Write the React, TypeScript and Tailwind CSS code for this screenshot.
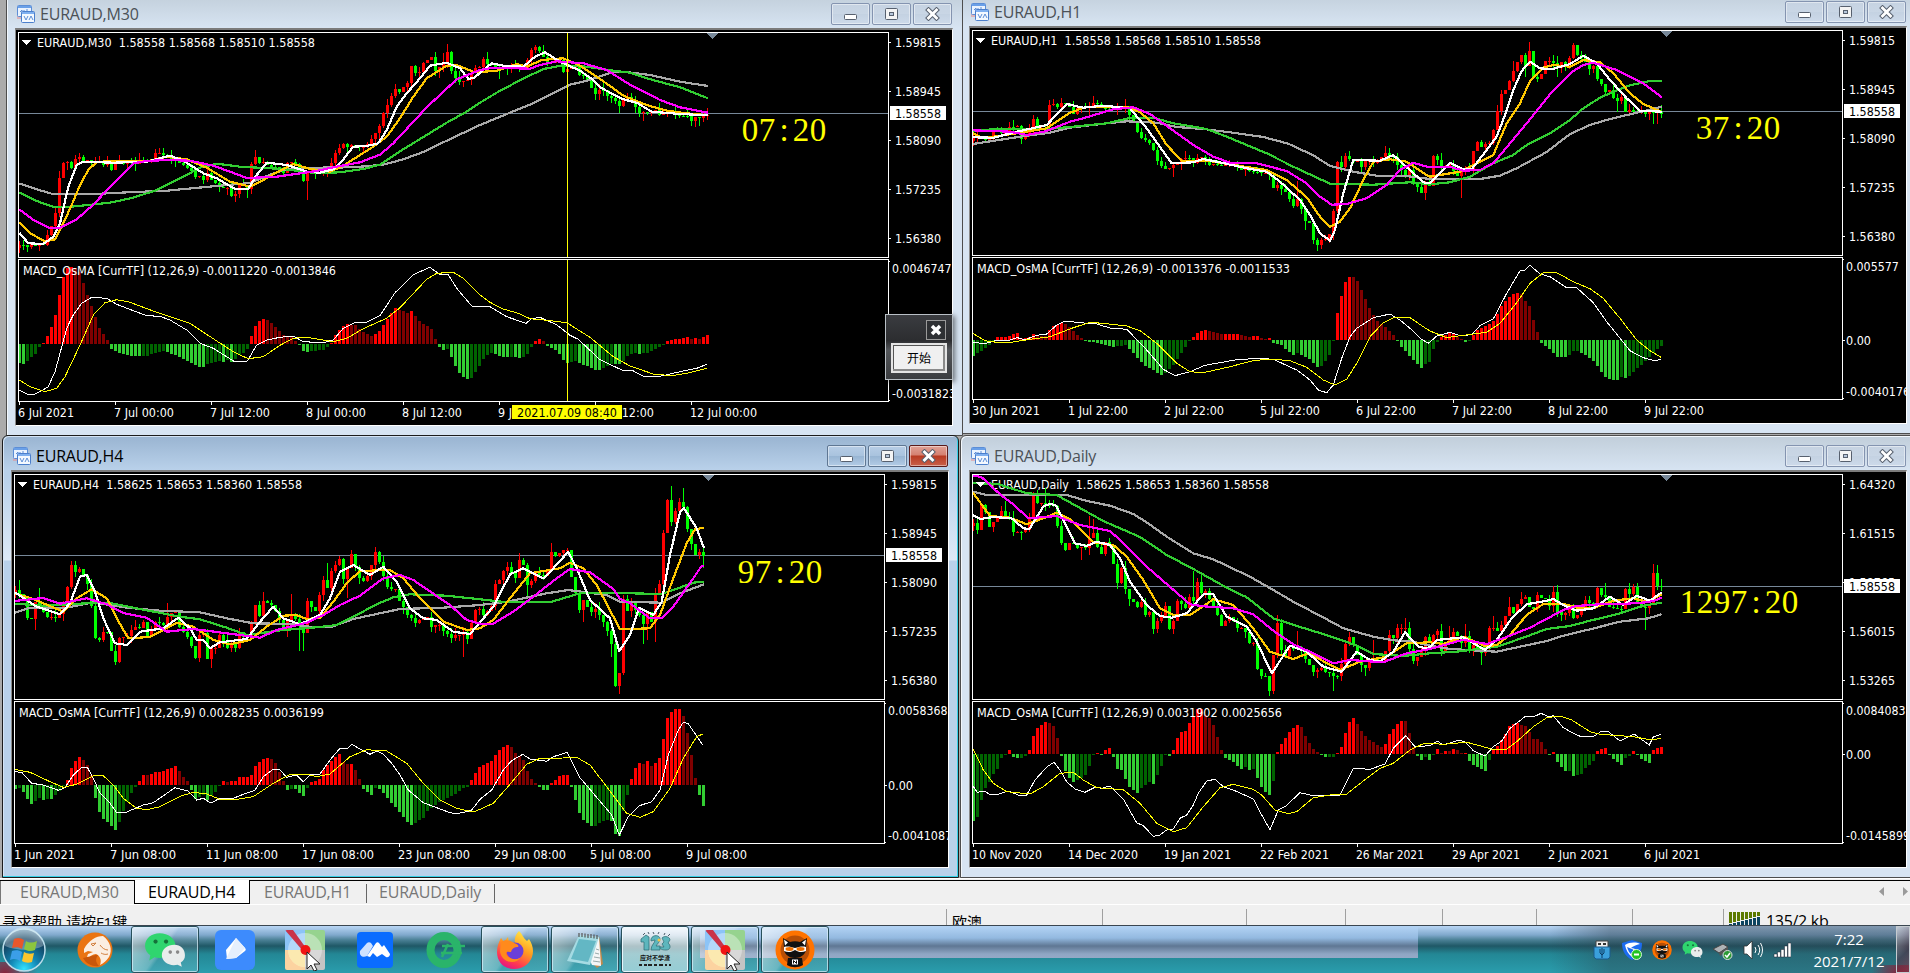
import type { ReactNode } from 'react';
import clsx from 'clsx';

type Point = [number, number];

type ChartData = {
  // sampling origin and the shift of the second half of every track (3 units per pixel)
  ox: number;
  oy: number;
  shift: number;
  close: string;
  wicks: string;
  white: string;
  gold: string;
  magenta: string;
  green: string;
  gray: string;
  zero: number;
  hist: string;
  macd: string;
  signal: string;
};

type ChartProps = {
  data: ChartData;
  title: string;
  titleWidth: number;
  macdTitle: string;
  macdWidth: number;
  prices: string[];
  priceY: number;
  scale: [string, string];
  timer: string;
  timerX: number;
  timerY: number;
  dates: [string, number][];
  crosshair?: boolean;
};

const BARS = 173;

const m30: ChartData = {
  ox: 54,
  oy: 96,
  shift: 1440,
  close:
    '58,735 70,735 82,740 94,730 106,737 118,728 130,735 142,706 154,680 166,643 178,535 190,488 202,484 214,505 226,478 238,470 250,482 290,486 310,495 322,482 334,510 346,490 400,485 440,485 455,480 466,460 478,458 490,465 510,475 540,490 560,502 586,530 610,540 622,518 646,550 670,565 682,562 694,588 706,582 718,550 742,570 754,492 766,470 778,488 802,495 850,520 862,490 880,484 898,512 910,545 922,518 960,520 990,500 1006,460 1030,430 1042,442 1054,435 1090,440 1110,425 1126,400 1138,380 1150,340 1162,315 1174,290 1186,268 1198,278 1210,262 1222,250 1234,198 1246,218 1258,218 1270,190 1282,180 1294,170 1306,215 1330,190 1342,155 1354,212 1366,235 1378,245 1402,240 1426,205 1434,185|0,205 10,178 35,195 60,205 80,210 95,195 130,205 142,180 154,150 166,140 178,152 200,185 240,180 250,215 275,205 290,200 300,230 322,240 346,282 370,270 394,292 420,320 430,300 450,290 465,320 478,340 500,340 520,330 540,345 560,338 590,345 620,345 634,365 646,350 658,355 672,345 684,345',
  wicks: '766,450 706,605 922,600 478,445 1342,132 1330,160 1318,235 742,593 82,755|58,236 418,338 490,362 634,378 658,378 346,300',
  white:
    '58,698 85,730 130,732 160,710 180,670 205,560 230,495 250,485 340,488 440,485 510,467 550,482 610,520 650,535 705,567 745,566 770,525 800,488 860,495 920,515 960,518 1000,508 1030,478 1060,440 1100,438 1135,430 1160,390 1190,320 1220,280 1260,235 1290,197 1340,188 1380,205 1405,237 1425,232|0,218 35,190 70,197 130,200 165,170 195,157 240,185 300,212 340,240 365,265 430,298 470,308 515,335 600,342 684,346',
  gold: '58,666 90,700 135,724 165,718 190,670 215,615 240,555 265,510 290,486 340,483 440,484 500,470 560,478 620,503 690,545 750,560 790,540 830,517 880,492 930,507 990,515 1030,497 1080,465 1120,440 1160,410 1200,355 1240,290 1280,235 1340,197 1370,195 1420,215|0,216 50,212 110,192 140,200 185,180 250,175 300,197 350,230 400,265 430,287 500,315 560,332 620,340 684,346',
  magenta:
    '58,628 100,660 150,684 180,684 230,658 280,614 340,550 400,490 440,483 500,480 570,482 640,497 690,515 740,534 830,530 950,513 1000,502 1080,487 1140,464 1180,430 1280,322 1370,238 1420,218|0,210 40,203 150,206 180,195 230,184 310,190 380,210 450,254 540,300 600,322 684,338',
  green:
    '58,577 110,603 158,620 215,620 330,608 400,593 470,570 550,530 600,503 650,491 720,500 850,507 950,520 1020,517 1090,507 1140,494 1210,448 1340,368 1400,335|0,308 60,272 130,236 190,207 250,196 310,199 400,212 450,218 500,235 600,262 684,295',
  gray: '58,550 110,568 158,582 300,581 385,577 500,572 640,559 750,549 800,528 850,510 940,503 1060,502 1150,494 1210,478 1270,456 1340,422|0,375 90,338 160,310 270,254 320,242 400,216 440,216 510,225 600,245 684,258',
  zero: 1032,
  hist: '58,1088 70,1092 82,1085 94,1070 106,1062 118,1043 130,1029 142,1008 154,981 166,948 178,888 190,832 202,805 214,800 226,803 238,815 250,847 262,882 274,918 286,951 298,983 310,1001 322,1020 334,1047 358,1060 394,1067 418,1068 442,1067 466,1058 490,1052 502,1056 526,1065 562,1083 598,1101 610,1102 622,1091 646,1085 658,1082 670,1086 682,1080 694,1086 718,1066 742,1050 754,1010 766,979 778,962 790,957 802,960 826,980 850,1005 874,1012 886,1022 898,1030 910,1053 922,1056 946,1052 970,1050 994,1030 1006,1005 1030,978 1042,972 1066,976 1090,996 1114,1008 1126,1003 1138,995 1162,957 1186,924 1222,938 1234,933 1258,963 1294,987 1306,1017 1318,1041 1330,1050 1342,1046 1354,1071 1366,1098 1378,1118 1390,1131 1402,1137 1414,1134 1426,1118|-2,1098 10,1076 22,1065 34,1058 46,1062 70,1071 82,1072 94,1070 106,1072 118,1073 130,1071 142,1062 154,1043 166,1023 178,1017 190,1023 202,1037 226,1050 238,1062 250,1080 262,1090 286,1083 298,1090 322,1099 346,1110 358,1111 370,1104 394,1092 418,1093 430,1083 442,1068 466,1058 478,1062 502,1058 526,1048 550,1036 562,1022 586,1018 622,1011 634,1018 646,1014 658,1017 670,1011 682,1005',
  macd: '58,1170 85,1184 105,1182 125,1172 145,1160 165,1115 180,1060 200,985 220,945 245,910 275,892 320,895 350,913 400,932 440,947 480,949 510,960 560,990 600,1030 640,1045 705,1086 742,1083 770,1035 800,1020 840,1012 880,1008 910,1025 970,1028 1000,1020 1030,985 1065,967 1100,967 1140,947 1185,878 1240,824 1290,802 1320,824 1345,824 1370,865 1415,918|0,919 30,920 80,950 138,970 155,956 180,952 230,974 270,1006 295,1018 360,1079 430,1112 455,1110 490,1129 535,1130 600,1115 650,1105 680,1093',
  signal:
    '58,1140 90,1160 135,1175 170,1165 195,1130 240,1035 280,945 315,908 350,899 385,905 470,937 570,970 650,1023 705,1058 745,1076 790,1070 840,1036 880,1015 920,1012 1000,1025 1040,1015 1090,986 1160,955 1200,923 1280,838 1310,820 1360,817 1390,835|0,885 30,907 70,927 115,940 150,956 200,961 260,968 330,1012 400,1070 450,1098 520,1122 575,1127 620,1120 680,1105',
};

const h1: ChartData = {
  ox: 36,
  oy: 90,
  shift: 1410,
  close:
    '40,415 52,412 76,422 100,385 112,395 124,400 170,370 184,418 208,385 220,355 232,380 256,378 268,316 292,320 304,308 328,320 340,342 352,325 400,310 424,322 460,328 484,325 500,315 510,350 522,370 534,398 546,415 558,420 570,430 582,452 594,488 606,500 630,505 640,495 660,480 680,472 700,490 724,470 750,495 770,495 800,495 830,498 850,515 880,515 910,520 930,525 940,565 955,552 975,575 990,598 1002,622 1014,595 1026,632 1038,668 1050,670 1062,728 1072,735 1084,720 1108,705 1120,638 1132,485 1144,502 1156,468 1168,478 1192,478 1204,502 1216,482 1240,490 1270,465 1280,455 1300,470 1312,495 1336,525 1348,510 1360,545 1372,560 1384,580 1396,545 1405,562|-2,562 10,468 22,480 35,500 60,490 82,530 94,512 118,508 130,455 142,425 154,440 178,430 190,393 202,335 214,283 226,272 238,243 250,215 262,187 274,165 286,200 298,150 310,230 322,237 334,225 346,183 358,182 382,205 394,185 410,200 418,175 430,135 442,165 460,180 480,208 490,195 502,238 514,250 526,275 538,268 550,295 562,303 574,290 586,335 600,330 630,335 650,342 670,340 682,335 694,342',
  wicks: '280,297 184,432 640,532 1084,748 1276,438 1396,600 1012,542 1036,690|94,593 298,126 286,230 382,230 562,335 670,372 682,372 250,183',
  white:
    '38,412 100,413 180,393 260,375 320,312 370,323 430,317 510,325 560,385 635,490 700,487 730,477 780,487 860,505 920,515 960,545 1020,600 1050,645 1080,700 1110,722 1125,690 1150,580 1180,480 1260,482 1300,465 1360,520 1395,550|0,550 60,488 100,508 125,508 170,450 200,410 225,345 250,270 275,213 300,185 330,205 365,208 420,192 460,167 500,190 540,240 590,295 630,332 695,335',
  gold: '38,400 70,415 150,403 260,385 330,338 380,320 500,320 540,337 580,370 620,435 665,482 750,483 840,498 920,510 980,540 1040,592 1080,650 1110,680 1140,665 1170,625 1210,540 1240,485 1290,478 1340,485 1400,525|0,530 90,515 190,465 230,370 270,310 300,243 340,203 370,195 420,200 460,180 510,187 550,220 600,280 640,312 695,336',
  magenta:
    '38,391 150,395 200,405 260,393 330,365 380,352 460,328 520,322 570,342 630,385 700,435 760,470 810,488 890,490 980,513 1040,550 1080,590 1115,614 1160,612 1220,595 1280,555 1320,510 1360,488 1400,500|0,500 60,500 100,512 150,510 190,490 240,430 300,358 360,283 430,213 460,195 490,188 560,210 640,250 695,292',
  green:
    '38,392 100,388 250,388 330,381 440,370 510,354 580,353 640,370 740,387 800,410 920,460 1000,500 1060,528 1110,551 1240,554 1350,547|0,553 60,547 120,530 190,490 250,465 290,435 360,400 420,360 460,325 510,293 550,275 600,256 660,243 695,243',
  gray: '38,432 130,418 200,407 270,398 330,383 440,370 500,364 590,368 650,381 730,387 810,397 910,411 985,431 1060,466 1110,498 1180,515 1250,527 1330,527|0,537 150,537 210,527 260,505 350,456 420,402 480,375 540,357 600,343 640,334 695,320',
  zero: 1020,
  hist: '40,1068 52,1059 64,1053 76,1044 88,1035 100,1022 112,1011 136,1011 172,999 184,1014 208,1012 220,1002 256,1010 268,990 280,978 304,970 316,973 328,981 352,1004 376,1022 400,1027 424,1033 460,1041 484,1038 496,1036 508,1047 520,1059 532,1074 556,1098 580,1111 604,1124 616,1118 640,1095 664,1059 688,1022 700,1011 712,999 736,990 784,1002 832,1002 868,1011 892,1008 916,1018 928,1014 940,1029 964,1036 1000,1064 1012,1059 1024,1066 1048,1077 1072,1101 1084,1097 1096,1085 1108,1068 1120,1025 1132,942 1144,890 1156,846 1168,830 1180,832 1192,843 1204,870 1216,897 1228,923 1240,945 1252,963 1276,981 1300,1003 1312,1023 1324,1041 1348,1066 1384,1104 1396,1092|-2,1089 10,1049 22,1027 34,1012 58,999 70,997 82,1012 94,1017 106,1026 118,1025 130,1006 142,990 178,972 190,963 202,942 214,918 226,903 250,882 262,879 274,880 286,903 298,915 310,957 322,996 334,1029 358,1047 382,1071 406,1072 418,1066 430,1053 442,1052 466,1066 490,1083 502,1098 526,1131 550,1140 562,1141 574,1131 586,1134 598,1127 634,1095 658,1070 682,1047 694,1037',
  macd: '38,1027 75,1031 105,1022 150,1020 172,1013 195,1019 230,1006 260,1002 290,975 315,963 360,968 410,972 450,984 500,988 520,1008 560,1050 610,1108 645,1127 690,1115 735,1096 830,1079 900,1075 940,1078 1010,1110 1050,1140 1075,1170 1100,1178 1120,1155 1145,1075 1170,1010 1190,985 1240,953 1290,942 1320,960 1350,985 1380,1015 1405,1030|0,1026 20,1008 60,997 90,1007 125,1004 150,977 190,957 230,880 270,812 285,810 300,796 330,822 360,830 410,863 440,863 490,908 530,965 600,1052 640,1073 675,1082 693,1078',
  signal:
    '38,1000 75,1022 110,1027 160,1026 210,1018 270,1010 340,983 390,967 440,971 500,978 540,992 590,1030 650,1090 690,1115 730,1118 810,1100 880,1082 930,1077 990,1082 1040,1102 1090,1140 1125,1155 1160,1138 1190,1090 1230,1010 1270,968 1300,953 1350,953 1390,980|0,993 50,1013 100,1006 170,997 210,970 260,908 300,850 340,818 380,818 430,845 480,866 520,895 570,955 620,1020 660,1052 693,1072',
};

const h4: ChartData = {
  ox: 42,
  oy: 117,
  shift: 1440,
  close:
    '46,465 70,485 82,548 94,555 106,500 130,530 154,545 178,540 202,460 214,388 226,410 238,402 262,445 274,510 286,608 298,615 310,590 322,590 334,645 346,683 358,610 382,605 394,585 418,580 430,560 442,605 466,560 490,572 502,545 526,530 538,575 550,590 574,632 586,672 598,600 610,590 622,672 634,640 646,640 658,600 682,640 694,625 706,640 718,590 742,605 754,570 766,510 778,545 790,498 814,510 838,555 850,590 874,535 898,570 910,598 922,498 946,530 970,435 982,460 994,410 1018,370 1030,435 1054,355 1078,430 1090,440 1102,425 1126,350 1138,380 1162,455 1186,460 1198,498 1210,515 1222,540 1246,565 1258,555 1280,540 1294,575 1310,570 1354,610 1378,600 1390,590 1402,615 1414,565 1426,525|-2,520 10,540 34,515 46,447 58,435 70,408 82,395 106,430 118,375 130,388 142,450 166,415 190,425 202,405 214,350 226,362 250,345 262,340 274,425 298,525 310,495 334,530 346,520 370,560 382,588 394,620 406,755 418,725 430,490 442,530 454,500 478,540 490,570 502,530 514,565 526,480 538,455 550,297 562,192 574,262 586,230 598,200 610,212 622,280 634,325 646,360 658,350 670,364',
  wicks:
    '106,586 118,458 58,435 346,690 634,700 898,647 910,647 874,477 1054,345 1126,336 1390,665 1042,490 790,470 502,505 982,385 1018,362|394,665 418,776 490,627 502,615 526,620 574,153 610,160 214,323 142,482 670,400 118,355 310,560 82,380',
  white:
    '44,472 110,515 180,538 210,505 240,425 260,420 285,470 310,550 345,625 380,630 420,590 490,580 535,548 570,580 590,615 610,615 630,640 660,622 740,612 780,560 820,515 850,550 900,568 960,540 990,490 1020,410 1060,390 1110,420 1150,395 1190,440 1230,520 1270,550 1310,555 1360,590 1410,597|0,562 40,515 90,418 130,400 190,430 220,400 265,350 290,400 330,495 390,550 418,648 450,600 478,518 520,540 545,500 570,360 600,232 612,220 650,280 672,340',
  gold: '44,475 100,492 190,530 230,490 275,463 320,490 350,550 385,610 450,606 530,563 580,575 640,615 690,628 750,615 800,575 850,542 890,540 920,552 960,548 1000,500 1040,445 1080,408 1170,405 1210,430 1260,490 1330,560 1400,585|0,580 40,555 90,490 150,415 240,400 270,383 310,400 350,450 420,583 510,580 540,540 580,430 620,325 645,283 672,278',
  magenta:
    '44,498 130,489 180,506 260,490 320,508 370,534 440,548 500,590 580,582 680,595 780,608 830,585 920,563 970,540 1020,510 1080,482 1150,430 1200,420 1240,435 1310,483 1350,510 1400,555|0,566 40,566 100,530 160,485 230,430 270,402 330,412 400,462 420,492 450,505 510,550 545,550 580,515 640,430 665,392 672,392',
  green:
    '44,506 130,512 260,505 330,504 420,522 540,545 600,553 680,578 740,600 850,585 960,576 1010,570 1060,545 1130,508 1180,487 1230,478 1340,482|0,493 80,502 210,502 300,475 450,475 545,477 580,465 640,443 672,440',
  gray: '44,533 90,518 200,518 280,502 380,518 480,527 600,532 680,550 760,565 870,567 930,575 995,575 1060,552 1200,522 1330,518|0,510 70,502 130,490 200,475 265,465 380,480 420,500 545,503 600,475 672,448',
  zero: 1050,
  hist: '46,1062 58,1058 70,1071 82,1092 94,1107 118,1088 130,1095 142,1091 154,1092 178,1070 190,1055 202,1038 214,999 226,978 238,966 250,975 262,990 274,1018 286,1088 298,1130 310,1152 334,1172 346,1185 358,1163 370,1130 382,1103 394,1076 406,1058 418,1038 430,1020 442,1021 466,1012 490,1008 526,993 538,1008 550,1025 562,1038 574,1065 586,1092 610,1080 622,1095 646,1073 658,1055 670,1038 682,1041 706,1037 718,1026 742,1026 754,1020 766,993 790,972 802,968 814,972 826,984 838,1010 850,1036 862,1065 874,1061 886,1062 898,1073 910,1085 922,1059 934,1041 958,1033 970,1005 994,978 1018,957 1030,980 1042,987 1054,986 1066,1005 1078,1032 1090,1061 1114,1080 1126,1060 1138,1062 1150,1072 1174,1103 1198,1130 1222,1160 1234,1170 1246,1163 1270,1149 1282,1128 1306,1110 1342,1088 1366,1078 1390,1060 1402,1058 1414,1035 1426,1014|-2,996 10,990 34,978 46,960 58,945 82,930 94,936 106,953 130,972 142,1008 154,1032 166,1042 178,1055 190,1064 202,1065 214,1044 226,1035 238,1023 262,1020 274,1053 286,1092 298,1133 310,1154 334,1173 346,1172 370,1158 382,1156 394,1157 406,1196 418,1206 430,1130 442,1083 454,1032 466,999 478,984 490,988 502,978 514,993 526,984 538,972 550,915 562,849 574,831 586,823 598,822 610,840 622,891 634,957 646,1026 658,1080 670,1113',
  macd: '44,1010 65,1012 95,1045 130,1050 175,1066 195,1058 220,1020 245,997 262,997 280,1030 300,1075 330,1105 350,1133 375,1133 430,1110 460,1103 525,1058 565,1068 590,1095 610,1090 632,1104 660,1090 700,1090 730,1078 765,1066 790,1025 820,1003 840,1005 860,1027 890,1020 910,1040 930,1020 960,1017 990,975 1020,940 1040,942 1055,928 1080,942 1110,958 1130,948 1150,958 1175,985 1200,1020 1225,1065 1270,1103 1350,1133 1370,1136 1400,1130 1415,1125|0,1093 35,1065 70,1005 95,977 128,958 150,972 200,979 220,965 262,952 300,1028 395,1140 418,1200 445,1145 478,1112 515,1100 540,1065 565,960 595,885 610,862 625,866 668,930',
  signal:
    '44,1003 90,1012 150,1040 190,1057 230,1048 280,1022 310,1022 340,1050 370,1090 410,1120 440,1124 480,1115 540,1084 580,1072 620,1077 660,1093 700,1095 760,1085 820,1045 870,1018 920,1018 950,1025 990,1017 1050,965 1100,944 1160,948 1220,985 1270,1045 1320,1095 1370,1120 1420,1131|0,1123 40,1105 90,1048 140,988 180,970 250,969 290,967 330,990 380,1055 440,1135 480,1147 520,1130 570,1060 610,970 650,905 668,897',
};

const daily: ChartData = {
  ox: 36,
  oy: 117,
  shift: 1410,
  close:
    '40,262 52,288 64,208 76,230 88,278 112,250 124,228 150,250 162,298 172,290 198,285 208,250 220,182 232,205 256,210 280,212 292,270 304,322 316,345 328,325 352,340 376,340 388,310 400,292 412,335 424,358 436,322 448,330 460,385 472,445 484,395 496,462 508,490 532,518 544,500 556,540 568,530 580,582 604,545 616,510 628,582 640,560 652,498 676,520 688,485 700,500 712,440 724,475 736,468 748,490 772,540 784,575 808,545 832,580 856,590 868,625 880,620 892,700 904,722 916,722 928,772 940,665 952,560 964,645 976,665 988,640 1024,645 1048,690 1060,710 1084,700 1108,715 1132,725 1144,690 1156,628 1168,605 1180,630 1204,690 1216,700 1230,670 1264,680 1276,650 1288,600 1300,610 1312,580 1336,575 1348,640 1360,680 1384,650 1396,605|-2,625 10,600 22,585 34,650 46,625 70,590 94,625 106,600 118,650 130,630 154,655 166,640 178,580 202,590 214,570 226,545 238,515 250,535 262,508 286,485 298,515 310,525 322,480 346,490 358,515 370,468 382,530 406,535 418,510 430,550 442,540 454,520 466,495 490,510 502,458 514,480 526,485 538,515 550,520 574,525 586,462 598,478 610,455 622,500 646,520 658,515 670,412 682,453 694,456',
  wicks:
    '388,243 400,252 256,160 232,165 364,375 700,408 724,412 1012,587 1120,768 952,540 1240,615 1336,549 940,776 580,597 136,198 1216,723|154,690 646,585 670,387 682,390 274,472 58,572 106,567 394,558 526,445 238,487 190,543',
  white:
    '38,240 60,252 100,246 155,250 190,280 208,282 250,215 270,206 288,212 310,255 345,325 380,333 410,320 450,330 480,370 510,440 560,510 600,543 635,548 680,535 730,478 760,478 800,545 860,575 890,620 935,715 990,632 1040,650 1090,695 1145,710 1190,650 1230,675 1260,680 1300,650 1335,592 1375,635 1400,640|0,635 20,615 100,607 165,645 200,615 245,550 290,508 350,497 370,492 400,510 440,527 490,520 540,485 580,510 620,482 660,497 695,472',
  gold: '38,172 90,243 150,248 200,268 250,250 290,233 330,253 400,322 460,330 500,365 550,435 600,520 640,540 690,540 760,493 820,510 880,580 930,650 1000,672 1045,655 1140,705 1200,680 1280,665 1340,625|0,622 40,627 100,605 170,635 200,630 240,600 290,540 340,507 400,507 450,520 490,520 550,497 610,490 650,500 695,478',
  magenta:
    '38,121 65,127 120,178 160,208 205,250 290,243 360,270 450,288 480,315 560,395 620,447 690,508 730,514 820,520 880,538 940,587 1000,628 1060,655 1120,685 1170,675 1270,682 1340,655|0,642 100,614 170,627 220,610 300,578 400,525 440,513 520,507 590,506 650,502 680,495 695,488',
  green:
    '38,145 110,146 200,175 290,180 340,208 430,258 540,306 620,360 700,402 800,458 860,487 940,550 1010,573 1090,597 1150,617 1190,632 1240,657 1330,663|0,655 80,650 200,635 280,608 350,582 420,573 480,557 560,538 640,512 695,503',
  gray: '38,170 80,180 320,180 380,198 450,212 520,237 560,262 620,305 700,355 760,373 870,425 940,465 1000,500 1100,553 1150,580 1240,605 1300,616 1360,620|0,632 60,642 200,650 280,633 350,618 400,602 480,583 570,560 655,550 695,538',
  zero: 958,
  hist: '40,1158 52,1149 64,1095 76,1060 88,1041 100,1017 112,1002 124,968 136,961 148,945 160,966 172,970 184,968 196,965 208,948 220,903 232,879 256,861 268,864 280,870 292,906 304,960 316,1006 328,1028 340,1041 352,1036 376,1022 388,993 400,960 412,954 424,962 436,945 448,939 460,963 472,1002 484,1005 496,1031 508,1056 532,1074 544,1058 568,1042 580,1047 604,995 616,960 628,963 640,948 652,909 664,891 676,888 688,864 712,822 724,820 736,840 748,849 760,870 772,903 784,945 796,969 820,982 844,1002 856,995 868,1005 880,1000 892,1029 904,1055 928,1083 940,1041 952,951 964,927 988,891 1012,870 1024,876 1036,903 1048,924 1060,942 1072,950 1084,961 1096,966 1120,965 1132,954 1144,939 1156,897 1168,861 1180,849 1192,867 1204,888 1228,915 1264,936 1276,927 1288,897 1312,867 1324,858 1336,857 1348,891 1360,935 1372,961 1384,975 1396,965|-2,975 10,962 22,942 34,954 46,948 58,949 70,942 82,943 94,955 106,954 118,978 130,990 166,1008 178,975 190,945 202,933 214,915 226,897 238,873 262,864 274,870 286,871 298,891 310,911 322,912 334,921 346,942 358,961 370,950 382,981 406,1008 418,1007 430,1023 442,1020 454,1019 466,1000 490,980 502,948 526,939 538,955 550,972 574,990 586,970 598,965 610,948 622,961 634,971 658,987 670,945 682,938 694,936',
  macd: '38,1052 52,1072 75,1068 90,1080 115,1078 145,1068 175,1080 200,1080 225,1035 260,996 282,982 300,1005 320,1040 345,1062 375,1072 405,1057 425,1060 450,1053 490,1092 530,1163 550,1172 580,1204 600,1200 620,1185 640,1182 660,1150 680,1140 700,1110 715,1075 740,1038 765,1033 790,1055 820,1065 880,1092 905,1140 930,1184 955,1125 975,1115 1020,1073 1050,1080 1140,1080 1180,1000 1230,1003 1275,987 1300,940 1337,902 1365,935|0,932 22,918 40,930 85,916 105,920 130,947 165,963 190,935 215,918 240,880 285,845 310,846 333,835 355,845 370,842 400,878 430,895 455,906 490,905 515,888 535,890 570,918 612,897 658,930 670,906 692,898',
  signal:
    '38,940 70,1005 100,1045 140,1070 210,1077 250,1055 300,1015 340,1012 370,1035 410,1058 490,1064 540,1105 590,1165 640,1190 680,1178 730,1115 780,1058 820,1048 880,1063 905,1080 945,1125 985,1136 1010,1130 1060,1088 1110,1080 1160,1077 1220,1030 1260,1000 1300,985 1350,945 1390,926|0,925 40,928 110,922 150,932 190,944 230,942 260,920 310,875 350,848 390,843 425,855 480,890 510,898 610,905 660,914 692,911',
};

// "x,y x,y|x,y" -> points in chart pixels
function parse(track: string, d: ChartData): Point[] {
  return track.split('|').flatMap((half, n) =>
    half.split(' ').map((pair): Point => {
      const [x, y] = pair.split(',').map(Number);
      return [(x + n * d.shift - d.ox) / 3, (y - d.oy) / 3];
    }),
  );
}

function valueAt(points: Point[], x: number) {
  let k = 1;
  while (k < points.length - 1 && points[k][0] < x) k++;
  const [x0, y0] = points[k - 1];
  const [x1, y1] = points[k];
  const t = Math.min(1, Math.max(0, (x - x0) / (x1 - x0)));
  return y0 + (y1 - y0) * t;
}

const noise = (n: number) => {
  const s = Math.sin(n * 127.1 + 11.7) * 43758.5453;
  return s - Math.floor(s);
};

function buildCandles(d: ChartData) {
  const close = parse(d.close, d);
  const wicks = parse(d.wicks, d);
  let up = '';
  let down = '';
  let prev = valueAt(close, 1.5) + 3;
  for (let i = 0; i < BARS; i++) {
    const x = 4 * i + 1.5;
    let c = valueAt(close, x);
    if (!close.some(([px]) => Math.abs(px - x) < 2)) c += (noise(i) - 0.5) * 5;
    const top = Math.round(Math.min(prev, c));
    const bottom = Math.max(top + 1, Math.round(Math.max(prev, c)));
    let hi = top - Math.round(noise(i + 200) ** 2 * 7);
    let lo = bottom + Math.round(noise(i + 400) ** 2 * 7);
    wicks.forEach(([wx, wy]) => {
      if (Math.abs(wx - x) > 1.9) return;
      if (wy < top) hi = Math.round(wy);
      else lo = Math.round(wy);
    });
    const shape = `M${4 * i} ${top}h3v${bottom - top}h-3zM${4 * i + 1} ${hi}h1v${lo - hi}h-1z`;
    if (c <= prev) up += shape;
    else down += shape;
    prev = c;
  }
  return { up, down };
}

function buildHistogram(d: ChartData) {
  const points = parse(d.hist, d);
  const zero = Math.round((d.zero - d.oy) / 3);
  const paths = { rise: '', riseFade: '', fall: '', fallFade: '' };
  let prev = valueAt(points, 1.5) - 1;
  for (let i = 0; i < BARS; i++) {
    const v = valueAt(points, 4 * i + 1.5);
    const y = Math.round(v);
    const shape = `M${4 * i} ${zero}h3V${y === zero ? zero + 1 : y}h-3z`;
    if (y < zero) paths[v <= prev + 0.05 ? 'rise' : 'riseFade'] += shape;
    else paths[v >= prev - 0.05 ? 'fall' : 'fallFade'] += shape;
    prev = v;
  }
  return paths;
}

const toPoints = (track: string, d: ChartData) =>
  parse(track, d)
    .map(([x, y]) => `${x.toFixed(1)},${y.toFixed(1)}`)
    .join(' ');

function Label({ x, y, width, fill = '#fff', children }: { x: number; y: number; width: number; fill?: string; children: ReactNode }) {
  return (
    <text x={x} y={y} fill={fill} textLength={width} lengthAdjust="spacingAndGlyphs">
      {children}
    </text>
  );
}

function Chart(p: ChartProps) {
  const d = p.data;
  const candles = buildCandles(d);
  const hist = buildHistogram(d);
  const zeroY = Math.round((d.zero - d.oy) / 3);
  const averages: [string, string][] = [
    [d.gray, '#a9a9a9'],
    [d.green, '#32cd32'],
    [d.gold, '#ffc800'],
    [d.white, '#ffffff'],
    [d.magenta, '#ff00ff'],
  ];

  return (
    <svg
      width="936"
      height="395"
      className="block bg-black font-['DejaVu_Sans_Condensed','DejaVu_Sans',sans-serif] text-[12px]"
      shapeRendering="crispEdges"
    >
      <defs>
        <clipPath id={`pane-${p.timer}`}>
          <rect x="1" y="1" width="869" height="224" />
        </clipPath>
      </defs>
      <g transform="translate(2 2)">
        <rect x="1" y={p.priceY} width="869" height="1" fill="#778899" />
        <Label x={19} y={15} width={p.titleWidth}>
          {p.title}
        </Label>
        <g clipPath={`url(#pane-${p.timer})`}>
          <path d={candles.up} fill="#ff0000" />
          <path d={candles.down} fill="#00ff00" />
          {averages.map(([track, color]) => (
            <polyline key={color} points={toPoints(track, d)} fill="none" stroke={color} strokeWidth="2.2" strokeLinejoin="round" />
          ))}
        </g>
        <path d="M4 8h9l-4.5 5z" fill="#fff" />
        <path d="M689 1h11l-5.5 6z" fill="#778899" />

        <path d={hist.rise} fill="#ff0000" />
        <path d={hist.riseFade} fill="#800000" />
        <path d={hist.fall} fill="#32cd32" />
        <path d={hist.fallFade} fill="#006400" />
        <polyline points={toPoints(d.macd, d)} fill="none" stroke="#fff" />
        <polyline points={toPoints(d.signal, d)} fill="none" stroke="#ff0" />
        <Label x={5} y={243} width={p.macdWidth}>
          {p.macdTitle}
        </Label>

        <rect x="0.5" y="0.5" width="870" height="225" fill="none" stroke="#fff" />
        <rect x="0.5" y="227.5" width="870" height="142" fill="none" stroke="#fff" />
        <text
          x={p.timer
            .split('')
            .map((_, i) => p.timerX + i * 17)
            .join(' ')}
          y={p.timerY}
          textAnchor="middle"
          fill="#ff0"
          className="font-['Liberation_Serif',serif] text-[33px]"
        >
          {p.timer}
        </text>

        {p.prices.map((price, i) => (
          <g key={price}>
            <rect x="871" y={10 + i * 49} width="2" height="1" fill="#fff" />
            <Label x={877} y={15 + i * 49} width={46}>
              {price}
            </Label>
          </g>
        ))}
        <rect x="872" y={p.priceY - 7} width="56" height="14" fill="#fff" />
        <Label x={877} y={p.priceY + 5} width={46} fill="#000">
          1.58558
        </Label>

        <Label x={874} y={241} width={p.scale[0].length * 6.6}>
          {p.scale[0]}
        </Label>
        <rect x="871" y={zeroY} width="2" height="1" fill="#fff" />
        <Label x={874} y={zeroY + 5} width={25}>
          0.00
        </Label>
        <Label x={874} y={366} width={p.scale[1].length * 6.4}>
          {p.scale[1]}
        </Label>
        <path d="M871 229h1v1h-1zM871 368h1v1h-1z" fill="#fff" />

        {p.dates.map(([date, width], i) => (
          <g key={date}>
            <rect x={1 + i * 96} y="370" width="1" height="3" fill="#fff" />
            <Label x={i * 96} y={385} width={width}>
              {date}
            </Label>
          </g>
        ))}

        {p.crosshair && (
          <>
            <rect x="549" y="1" width="1" height="224" fill="#ff0" />
            <rect x="549" y="228" width="1" height="141" fill="#ff0" />
            <rect x="494" y="373" width="110" height="14" fill="#ff0" />
            <Label x={499} y={385} width={100} fill="#000">
              2021.07.09 08:40
            </Label>
          </>
        )}
      </g>
    </svg>
  );
}

function ChartIcon() {
  return (
    <svg width="18" height="18" viewBox="0 0 18 18" className="shrink-0">
      <path d="M0 11h5M0 13h4" stroke="#e88a8a" />
      <rect x="0.5" y="0.5" width="14" height="11" rx="1" fill="#eaf3ff" stroke="#5c8ed6" />
      <path d="M1 1h13v2H1z" fill="#6aa0e8" />
      <path d="M3 7l2-2v4m2-4v3m3-4v5" stroke="#5c8ed6" fill="none" />
      <rect x="4.5" y="6.5" width="13" height="11" rx="1" fill="#f4f9ff" stroke="#4b7fcc" />
      <path d="M5 7h12v2H5z" fill="#7fb0f0" />
      <path d="M7 11l2 4 2-4m1 4l2-4 2 4" stroke="#5c8ed6" fill="none" />
    </svg>
  );
}

function WindowButton({ kind, active }: { kind: 'min' | 'max' | 'close'; active?: boolean }) {
  const red = active && kind === 'close';
  return (
    <div
      className={clsx(
        'flex h-[22px] w-[39px] items-center justify-center rounded-[2px] border shadow-[inset_0_0_0_1px_rgba(255,255,255,0.45)]',
        red
          ? 'border-[#5a1a1a] bg-[linear-gradient(#e0a196,#d58171_45%,#b83a22_50%,#c8604a)]'
          : active
            ? 'border-[#5f7793] bg-[linear-gradient(#b7cde6,#a9c3de_48%,#98b5d3_52%,#b3cce6)]'
            : 'border-[#8494b0] bg-[linear-gradient(#c6d3e2,#c9d6e5_50%,#c4d2e2_52%,#cddaea)]',
      )}
    >
      <svg width="15" height="14" viewBox="0 0 15 14">
        {kind === 'min' && <rect x="1.5" y="7.5" width="12" height="5" rx="1" fill="#fff" stroke="#57606e" />}
        {kind === 'max' && (
          <>
            <rect x="1.5" y="1.5" width="12" height="11" rx="1" fill="#f4f4f4" stroke="#57606e" />
            <rect x="5.5" y="5.5" width="4" height="3" fill="#b8c8dc" stroke="#57606e" />
          </>
        )}
        {kind === 'close' && (
          <>
            <path d="M3.5 3l8 8M11.500 3l-8 8" stroke="#57606e" strokeWidth="4.800" strokeLinecap="square" />
            <path d="M3.5 3l8 8M11.500 3l-8 8" stroke="#fff" strokeWidth="2.800" strokeLinecap="square" />
          </>
        )}
      </svg>
    </div>
  );
}

function ChartWindow({ title, active, className, children }: { title: string; active?: boolean; className: string; children: ReactNode }) {
  return (
    <section
      className={clsx(
        'absolute h-[443px] w-[957px] rounded-t-[6px] border',
        active
          ? 'border-[#1c1c1c] bg-[linear-gradient(#99b4d1,#b9d1ea_34px,#b9d1ea_40px,#dde9f6_124px,#b9d1ea_125px)] shadow-[inset_-1px_-1px_0_#35cfe6,inset_1px_1px_0_#d5e4f4]'
          : 'border-[#4d4d4d] bg-[linear-gradient(#c1ceda,#d7e4f2_34px)] shadow-[inset_1px_1px_0_#f2f7fc]',
        className,
      )}
    >
      <header className="flex h-[34px] items-start pt-[9px] pr-[10px] pl-[10px]">
        <div className="flex grow items-center gap-[5px] pt-[2px]">
          <ChartIcon />
          <span className={clsx('text-base leading-[18px] tracking-[-0.2px]', active ? 'text-black' : 'text-[#4b5157]')}>{title}</span>
        </div>
        <div className="flex gap-[2px]">
          <WindowButton kind="min" active={active} />
          <WindowButton kind="max" active={active} />
          <WindowButton kind="close" active={active} />
        </div>
      </header>
      <div className="ml-2 w-[938px] border-t-2 border-r border-b border-l border-t-[#7b7b7b] border-r-white border-b-white border-l-[#8a8a8a]">
        {children}
      </div>
    </section>
  );
}

function TargetIcon() {
  return (
    <svg width="42" height="42" viewBox="0 0 42 42">
      <g clipPath="inset(0 round 2px)">
        <path d="M1 1h20v20H1z" fill="#8cc4f7" />
        <path d="M21 1h20v20H21z" fill="#96d38f" />
        <path d="M1 21h20v20H1z" fill="#fcd3a0" />
        <path d="M21 21h20v20H21z" fill="#c4c4c4" />
        <circle cx="21" cy="21" r="17" fill="#fff" opacity=".35" />
        <path d="M21 21L4 21a17 17 0 0 0 17 17z" fill="#fbe9b0" />
        <path d="M1 1h8l13 18-3 3z" fill="#c9344b" />
      </g>
      <circle cx="21.500" cy="21" r="5" fill="#f01414" />
      <path d="M23 23v17l4-4 3 6 3-1-3-6h6z" fill="#fff" stroke="#222" />
    </svg>
  );
}

function WeChatIcon({ size }: { size: number }) {
  return (
    <svg width={size} height={size} viewBox="0 0 40 40">
      <path d="M15 4C7 4 1 9 1 16c0 4 2 7 5 9l-1 5 5-3c9 2 20-2 20-11C30 9 23 4 15 4z" fill="#2fd56f" />
      <circle cx="11" cy="12" r="2" fill="#15713a" />
      <circle cx="21" cy="12" r="2" fill="#15713a" />
      <path d="M29 15c-7 0-12 4-12 10s7 11 15 9l4 2-1-4c3-2 4-4 4-7 0-6-4-10-10-10z" fill="#e9ecec" />
      <circle cx="25" cy="22" r="1.700" fill="#888" />
      <circle cx="32" cy="22" r="1.700" fill="#888" />
    </svg>
  );
}

function NinjaIcon({ size }: { size: number }) {
  return (
    <svg width={size} height={size} viewBox="0 0 40 40">
      <circle cx="20" cy="20" r="19.500" fill="#ff7300" />
      <circle cx="20" cy="20" r="14.500" fill="#b84f06" />
      <path d="M8 8l7 4c3-1 7-1 10 0l7-4-1 9c1 6-4 11-11 11S8 23 9 17z" fill="#111" />
      <path d="M9 9.500l4 3-3 3zM31 9.500l-4 3 3 3z" fill="#fff" />
      <path d="M9 17c4-1 7 0 11 1 4-1 7-2 11-1v4c-4 2-8 1-11-1-3 2-7 3-11 1z" fill="#fff" />
      <ellipse cx="14.500" cy="19" rx="4" ry="1.900" fill="#f07000" />
      <ellipse cx="25.500" cy="19" rx="4" ry="1.900" fill="#f07000" />
      <path d="M13 28h14l1 7c-5 3-11 3-16 0z" fill="#111" />
      <rect x="17" y="29.500" width="6" height="5" fill="#fff" />
      <path d="M18.500 33.500v-3l3 3v-3" stroke="#111" fill="none" />
    </svg>
  );
}

function StartOrb() {
  return (
    <svg width="46" height="46" viewBox="0 0 46 46">
      <defs>
        <radialGradient id="orb" cx=".5" cy=".95" r=".95">
          <stop offset="0" stopColor="#33e3ff" />
          <stop offset=".35" stopColor="#1287b5" />
          <stop offset=".75" stopColor="#12425f" />
          <stop offset="1" stopColor="#7fa6bf" />
        </radialGradient>
      </defs>
      <circle cx="23" cy="23" r="21" fill="url(#orb)" stroke="#b8dcea" strokeWidth="1.500" />
      <path d="M4 19a19 19 0 0 1 38 0c-10 5-26 5-38 0z" fill="#fff" opacity=".3" />
      <path d="M13 12c4-2 7-1 10 1l-2 9c-3-2-6-2-10-1z" fill="#e8572b" />
      <path d="M25 14c3 2 7 2 11 0l-2 9c-4 2-8 1-11-1z" fill="#8cc63e" />
      <path d="M11 24c3-1 7-1 10 1l-2 9c-3-2-6-3-10-1z" fill="#3b9ee8" />
      <path d="M23 25c3 2 7 2 10 1l-2 9c-3 1-7 1-10-1z" fill="#fbc52d" />
    </svg>
  );
}

function CheetahIcon() {
  return (
    <svg width="38" height="38" viewBox="0 0 38 38">
      <circle cx="19" cy="19" r="17.500" fill="#ea7412" />
      <path d="M7 27c3 6 10 9 16 8-4-4-4-9 1-12z" fill="#c9570a" />
      <path d="M8 18C13 9 20 5 27 5c7 5 10 14 6 21-3 4-5 6-9 8 2-5 0-9-4-11-4 0-5 3-9 3l1-3 5-2-5-1-4 2z" fill="#fbeee2" />
      <path d="M15 13l5-1-3 3zM24 14c2 3 5 5 8 5M25 22c2 1 4 2 7 1" stroke="#d2803f" fill="none" />
    </svg>
  );
}

function FirefoxIcon() {
  return (
    <svg width="40" height="40" viewBox="0 0 40 40">
      <defs>
        <linearGradient id="fox" x1=".8" y1="0" x2=".3" y2="1">
          <stop offset="0" stopColor="#fff04a" />
          <stop offset=".45" stopColor="#ff9a1f" />
          <stop offset=".8" stopColor="#ff3654" />
          <stop offset="1" stopColor="#e01585" />
        </linearGradient>
      </defs>
      <path d="M24 1c4 4 4 7 8 10l2-2c4 6 5 12 3 18-3 8-10 12-18 12C9 39 2 32 2 22c0-6 2-10 4-14l3 4 4-5 1 6c2-1 4-1 6 0-1-5 1-9 4-12z" fill="url(#fox)" />
      <circle cx="20" cy="21" r="8.500" fill="#6a3fd8" />
      <path d="M6 12c4-3 9-2 13 1 4 1 5 3 4 4-3 0-6 1-7 5-2 0-4-1-5 1 1 5 8 8 14 5-4 7-19 5-20-7z" fill="#ff8a1c" />
    </svg>
  );
}

function NotepadIcon() {
  return (
    <svg width="38" height="38" viewBox="0 0 38 38">
      <path d="M33 5l4 28-6 4-4-4z" fill="#c08a4d" />
      <path d="M13 4l20 2 2 29-9-1z" fill="#f4f6f7" />
      <path d="M13 4l20 2-9 28L1 30z" fill="#a5dbe3" />
      <path d="M13 8l17 2-8 21-17-3z" fill="#63b7c4" />
      <path d="M13 2v4M16 2v4M19 2.500v4M22 3v4M25 3v4M28 3.500v4M31 4v4" stroke="#555" strokeWidth="1.200" />
      <path d="M30 18l3 1M29 22l4 1M28 26l6 1M27 30l7 1" stroke="#9aa" />
    </svg>
  );
}

function MonstersIcon() {
  return (
    <svg width="36" height="38" viewBox="0 0 36 38">
      <g fill="#5db6bd" stroke="#2c6b72" strokeWidth=".7">
        <path d="M4 8l5-4 3 2v13H7v-8H4z" />
        <path d="M14 8c2-5 9-4 9 0 0 3-3 5-4 7h4v4h-9c0-5 4-7 4-10l-4 1z" />
        <path d="M25 7c3-3 8-1 8 2l-2 3c3 2 3 7-2 7-4 0-6-1-6-3h4l-2-3 2-2z" />
      </g>
      <path d="M6 4l2-2M12 3l-1-2M17 3l-1-2M21 3l1-2M27 4l1-2M31 5l2-2" stroke="#234" strokeWidth=".8" />
      <circle cx="22" cy="9" r="1.500" fill="#f4c542" />
      <text x="18" y="29" textAnchor="middle" fill="#111" className="font-['Noto_Sans_CJK_SC',sans-serif] text-[6px] font-bold">
        应对不学渣
      </text>
      <path d="M2 34h3M7 34h3M11 34h4M17 34h3M22 34h4M28 34h2M32 34h2" stroke="#222" strokeWidth="2" />
    </svg>
  );
}

const taskItems: { icon: ReactNode; look?: 'framed' | 'bright' }[] = [
  { icon: <CheetahIcon /> },
  { icon: <WeChatIcon size={42} />, look: 'framed' },
  {
    icon: (
      <svg width="40" height="40" viewBox="0 0 40 40">
        <rect width="40" height="40" rx="6" fill="#3d8bfd" />
        <path d="M12 29l-1-9L21 8l9 10c1 1 1 2 0 3l-9 7z" fill="#fff" />
        <path d="M21 8l9 10-9 10-10 1z" fill="#e5effd" />
      </svg>
    ),
  },
  { icon: <TargetIcon /> },
  {
    icon: (
      <svg width="36" height="36" viewBox="0 0 36 36">
        <rect width="36" height="36" rx="4" fill="#0a6cff" />
        <path d="M3 19l7-8c1-1 3-1 4 0l2 3-6 10c-4 2-8 0-7-5z" fill="#cfe2ff" />
        <path d="M10 24l9-13c1-1 2-1 3 0l3 4 2-2 6 9c0 2-2 4-4 3l-4-3-5 3-4-4-3 4z" fill="#fff" />
      </svg>
    ),
  },
  {
    icon: (
      <svg width="40" height="40" viewBox="0 0 40 40">
        <ellipse cx="19" cy="20" rx="13.500" ry="14" fill="none" stroke="#2ab46a" strokeWidth="8" />
        <path d="M17 16h23M16 23h21M23 14l-6 13M34 11l-3 17" stroke="#2ab46a" strokeWidth="2.500" />
      </svg>
    ),
  },
  { icon: <FirefoxIcon />, look: 'framed' },
  { icon: <NotepadIcon />, look: 'framed' },
  { icon: <MonstersIcon />, look: 'bright' },
  { icon: <TargetIcon />, look: 'framed' },
  { icon: <NinjaIcon size={40} />, look: 'framed' },
];

function Taskbar() {
  return (
    <footer className="flex h-12 items-stretch border-t border-[#3a4650] bg-no-repeat [background-image:radial-gradient(circle,#8a2038,transparent_70%),radial-gradient(circle,#8a2038,transparent_70%),linear-gradient(90deg,transparent,rgba(45,60,72,0.4)_60px),linear-gradient(#b4d4f5,#93b9e0_12px,#5f7793_20px,#8fa6c4_28px,#94a9c6),linear-gradient(#b9d6f5,#7fa8cc_9px,#4a8095_14px,#1f5866_20px,#238795_28px,#2a9cac_46px)] [background-position:-40px_36px,1860px_39px,1550px_0px,700px_0px,0px_0px] [background-size:90px_24px,80px_20px,360px_48px,718px_32px,1910px_48px]">
      <div className="flex w-[61px] items-center pl-[1px]">
        <StartOrb />
      </div>
      <div className="flex gap-[2px]">
        {taskItems.map((item, i) => (
          <div
            key={i}
            className={clsx(
              'flex h-[47px] w-[68px] items-center justify-center rounded-[3px]',
              item.look && 'border border-[#28505c]',
              item.look === 'framed' &&
                'bg-[linear-gradient(125deg,rgba(255,255,255,0.65),rgba(255,255,255,0.3)_45%,rgba(255,255,255,0.1)_50%,rgba(255,255,255,0.12))] shadow-[inset_0_0_0_1px_rgba(220,240,250,0.7)]',
              item.look === 'bright' &&
                'bg-[linear-gradient(rgba(255,255,255,0.85),rgba(255,255,255,0.6)_50%,rgba(255,255,255,0.5))] shadow-[inset_0_0_0_1px_rgba(240,250,255,0.9)]',
            )}
          >
            {item.icon}
          </div>
        ))}
      </div>

      <div className="ml-auto flex items-center gap-[10px] pr-[8px]">
        <svg width="20" height="20" viewBox="0 0 20 20">
          <path d="M4 1h12v7H4z" fill="#eee" stroke="#444" />
          <path d="M6 3h3v2H6zM11 3h3v2h-3z" fill="#333" />
          <path d="M2 7h16v10l-2 2H4l-2-2z" fill="#3aa0dc" stroke="#1a5b8c" />
          <path d="M8 9v4l2 2 2-2V9M10 8v10" stroke="#0d3f66" fill="none" />
        </svg>
        <svg width="20" height="20" viewBox="0 0 20 20">
          <path d="M0 3l10-3 10 3c0 8-3 13-10 17C3 16 0 11 0 3z" fill="#1c6cf0" />
          <path d="M3 5c5-3 11-3 15-1-4 1-7 2-9 4 4 1 6 1 7 3-2 4-4 5-6 6-4-3-6-7-7-12z" fill="#fff" />
          <path d="M5 7l5 2 5 3-5 3c-3-2-4-5-5-8z" fill="#1c6cf0" />
          <circle cx="14.500" cy="14.500" r="5" fill="#22c322" stroke="#d9f5d9" />
          <path d="M12 14.500h5" stroke="#fff" strokeWidth="2" />
        </svg>
        <NinjaIcon size={20} />
        <WeChatIcon size={21} />
        <svg width="20" height="20" viewBox="0 0 20 20">
          <path d="M0 9l10-5 5 3-9 6z" fill="#aeb2b6" stroke="#444" />
          <path d="M6 13l9-6v3l-8 6z" fill="#555" />
          <circle cx="14.500" cy="15" r="4.500" fill="#2a9a34" stroke="#ddd" />
          <path d="M12 15l2 2 3-4" stroke="#fff" strokeWidth="1.500" fill="none" />
        </svg>
        <svg width="20" height="20" viewBox="0 0 20 20">
          <path d="M1 6h3l5-5v18l-5-5H1z" fill="#fff" stroke="#333" strokeWidth=".8" />
          <path d="M12 7q2 3 0 6M15 5q3.500 5 0 10M17.500 3q4 7 0 14" stroke="#fff" fill="none" />
        </svg>
        <svg width="18" height="16" viewBox="0 0 18 16" fill="#fff" stroke="#223" strokeWidth=".5">
          <path d="M1 12h3v3H1zM4.500 10h3v5h-3zM8 7.500h3V15H8zM11.500 4h3v11h-3zM15 1h3v14h-3z" />
        </svg>
        <div className="ml-[9px] w-[78px] text-center text-[15px] leading-[22px] text-white">
          <div>7:22</div>
          <div>2021/7/12</div>
        </div>
      </div>
      <div className="h-[47px] w-[14px] border border-[#c5cbd0] bg-[linear-gradient(135deg,rgba(255,255,255,0.5),rgba(90,40,60,0.5)_60%,rgba(160,40,60,0.5))]" />
    </footer>
  );
}

function TabBar() {
  return (
    <nav className="flex h-[27px] items-start border-t border-b border-white bg-[#f0f0f0] pt-px text-base leading-[22px] tracking-[-0.2px] text-[#777]">
      <div className="flex h-6 w-full border-t border-black">
        <div className="w-[134px] border-l border-[#777] pl-[19px]">EURAUD,M30</div>
        <div className="mt-[-1px] h-6 w-[116px] border-x border-b border-black bg-white pl-[13px] leading-[25px] text-black">EURAUD,H4</div>
        <div className="w-[116px] pl-[14px]">EURAUD,H1</div>
        <div className="mt-[3px] h-[19px] w-[129px] border-x border-[#666] pl-[12px] leading-[17px]">EURAUD,Daily</div>
        <div className="ml-auto flex items-center gap-[19px] pr-[2px] pb-[2px]">
          <svg width="5" height="9" viewBox="0 0 5 9">
            <path d="M5 0v9L0 4.500z" fill="#9a9a9a" />
          </svg>
          <svg width="5" height="9" viewBox="0 0 5 9">
            <path d="M0 0v9l5-4.500z" fill="#9a9a9a" />
          </svg>
        </div>
      </div>
    </nav>
  );
}

function StatusBar() {
  return (
    <div className="flex h-5 overflow-hidden bg-[#f0f0f0] pt-1 text-[15px] leading-[26px] text-black">
      <div className="w-[946px] pl-[2px]">寻求帮助,请按F1键</div>
      <div className="w-[156px] border-l border-[#a0a0a0] pl-[5px] text-[15px]">欧澳</div>
      <div className="w-[144px] border-l border-[#a0a0a0]" />
      <div className="w-[99px] border-l border-[#a0a0a0]" />
      <div className="w-[97px] border-l border-[#a0a0a0]" />
      <div className="w-[94px] border-l border-[#a0a0a0]" />
      <div className="w-[96px] border-l border-[#a0a0a0]" />
      <div className="w-[91px] border-l border-[#a0a0a0]" />
      <div className="flex border-l border-[#a0a0a0] pl-[5px]">
        <svg width="32" height="14" viewBox="0 0 32 14" className="mt-[3px]" shapeRendering="crispEdges">
          {[0, 1, 2, 3, 4, 5, 6, 7].map((i) => (
            <g key={i}>
              <rect x={i * 4} y="0" width="3" height="14" fill="#5c7a00" />
              <rect x={i * 4} y={11 - i} width="3" height="1" fill="#f0f0f0" />
              <rect x={i * 4} y={12 - i} width="3" height={2 + i} fill="#0b4460" />
            </g>
          ))}
        </svg>
        <span className="pl-[5px] text-base tracking-[-0.3px]">135/2 kb</span>
      </div>
    </div>
  );
}

function StartPanel() {
  return (
    <div className="absolute top-[314px] left-[885px] z-20 flex h-[66px] w-[68px] flex-col items-end border border-[#b9c0c6] bg-[linear-gradient(#3a3c40,#2c2d30_40%,#54575b_55%,#3b3d40)] shadow-[2px_2px_5px_rgba(0,0,0,0.5)]">
      <div className="mt-[5px] mr-[6px] flex h-5 w-5 items-center justify-center border border-[#9a9a9a] bg-[#2e3033]">
        <svg width="12" height="12" viewBox="0 0 12 12">
          <path d="M2 2l8 8M10 2l-8 8" stroke="#fff" strokeWidth="3.500" />
        </svg>
      </div>
      <button className="mt-[3px] mr-[5px] h-[30px] w-[56px] border-2 border-[#e5e5e5] bg-[#f0f0f0] font-['Noto_Sans_CJK_SC',sans-serif] text-[12px] leading-[24px] text-black shadow-[inset_-1px_-1px_0_1px_#8a8a8a,inset_0_0_0_1px_#555]">
        开始
      </button>
    </div>
  );
}

export default function App() {
  return (
    <main className="flex h-[973px] w-[1910px] flex-col overflow-hidden bg-[#ababab] font-['Open_Sans','Noto_Sans_CJK_SC',sans-serif]">
      <div className="relative h-[878px] overflow-hidden">
        <ChartWindow title="EURAUD,H1" className="top-[-9px] left-[960px]">
          <Chart
            data={h1}
            title={'EURAUD,H1\u00a0 1.58558 1.58568 1.58510 1.58558'}
            titleWidth={270}
            macdTitle="MACD_OsMA [CurrTF] (12,26,9) -0.0013376 -0.0011533"
            macdWidth={313}
            prices={['1.59815', '1.58945', '1.58090', '1.57235', '1.56380']}
            priceY={81}
            scale={['0.005577', '-0.0040176']}
            timer="37:20"
            timerX={732}
            timerY={109}
            dates={[
              ['30 Jun 2021', 68],
              ['1 Jul 22:00', 60],
              ['2 Jul 22:00', 60],
              ['5 Jul 22:00', 60],
              ['6 Jul 22:00', 60],
              ['7 Jul 22:00', 60],
              ['8 Jul 22:00', 60],
              ['9 Jul 22:00', 60],
            ]}
          />
        </ChartWindow>
        <ChartWindow title="EURAUD,M30" className="top-[-7px] left-[6px]">
          <Chart
            data={m30}
            title={'EURAUD,M30\u00a0 1.58558 1.58568 1.58510 1.58558'}
            titleWidth={278}
            macdTitle="MACD_OsMA [CurrTF] (12,26,9) -0.0011220 -0.0013846"
            macdWidth={313}
            prices={['1.59815', '1.58945', '1.58090', '1.57235', '1.56380']}
            priceY={81}
            scale={['0.0046747', '-0.0031823']}
            timer="07:20"
            timerX={732}
            timerY={109}
            crosshair
            dates={[
              ['6 Jul 2021', 56],
              ['7 Jul 00:00', 60],
              ['7 Jul 12:00', 60],
              ['8 Jul 00:00', 60],
              ['8 Jul 12:00', 60],
              ['9 Jul 00:00', 60],
              ['9 Jul 12:00', 60],
              ['12 Jul 00:00', 67],
            ]}
          />
        </ChartWindow>
        <ChartWindow title="EURAUD,Daily" className="top-[435px] left-[960px]">
          <Chart
            data={daily}
            title={'EURAUD,Daily\u00a0 1.58625 1.58653 1.58360 1.58558'}
            titleWidth={278}
            macdTitle="MACD_OsMA [CurrTF] (12,26,9) 0.0031902 0.0025656"
            macdWidth={305}
            prices={['1.64320', '1.61515', '1.58765', '1.56015', '1.53265']}
            priceY={112}
            scale={['0.0084083', '-0.0145899']}
            timer="1297:20"
            timerX={716}
            timerY={139}
            dates={[
              ['10 Nov 2020', 70],
              ['14 Dec 2020', 70],
              ['19 Jan 2021', 67],
              ['22 Feb 2021', 69],
              ['26 Mar 2021', 68],
              ['29 Apr 2021', 68],
              ['2 Jun 2021', 61],
              ['6 Jul 2021', 56],
            ]}
          />
        </ChartWindow>
        <ChartWindow title="EURAUD,H4" active className="top-[435px] left-[2px]">
          <Chart
            data={h4}
            title={'EURAUD,H4\u00a0 1.58625 1.58653 1.58360 1.58558'}
            titleWidth={269}
            macdTitle="MACD_OsMA [CurrTF] (12,26,9) 0.0028235 0.0036199"
            macdWidth={305}
            prices={['1.59815', '1.58945', '1.58090', '1.57235', '1.56380']}
            priceY={81}
            scale={['0.0058368', '-0.0041087']}
            timer="97:20"
            timerX={732}
            timerY={109}
            dates={[
              ['1 Jun 2021', 61],
              ['7 Jun 08:00', 66],
              ['11 Jun 08:00', 72],
              ['17 Jun 08:00', 72],
              ['23 Jun 08:00', 72],
              ['29 Jun 08:00', 72],
              ['5 Jul 08:00', 61],
              ['9 Jul 08:00', 61],
            ]}
          />
        </ChartWindow>
        <StartPanel />
      </div>
      <TabBar />
      <StatusBar />
      <Taskbar />
    </main>
  );
}
